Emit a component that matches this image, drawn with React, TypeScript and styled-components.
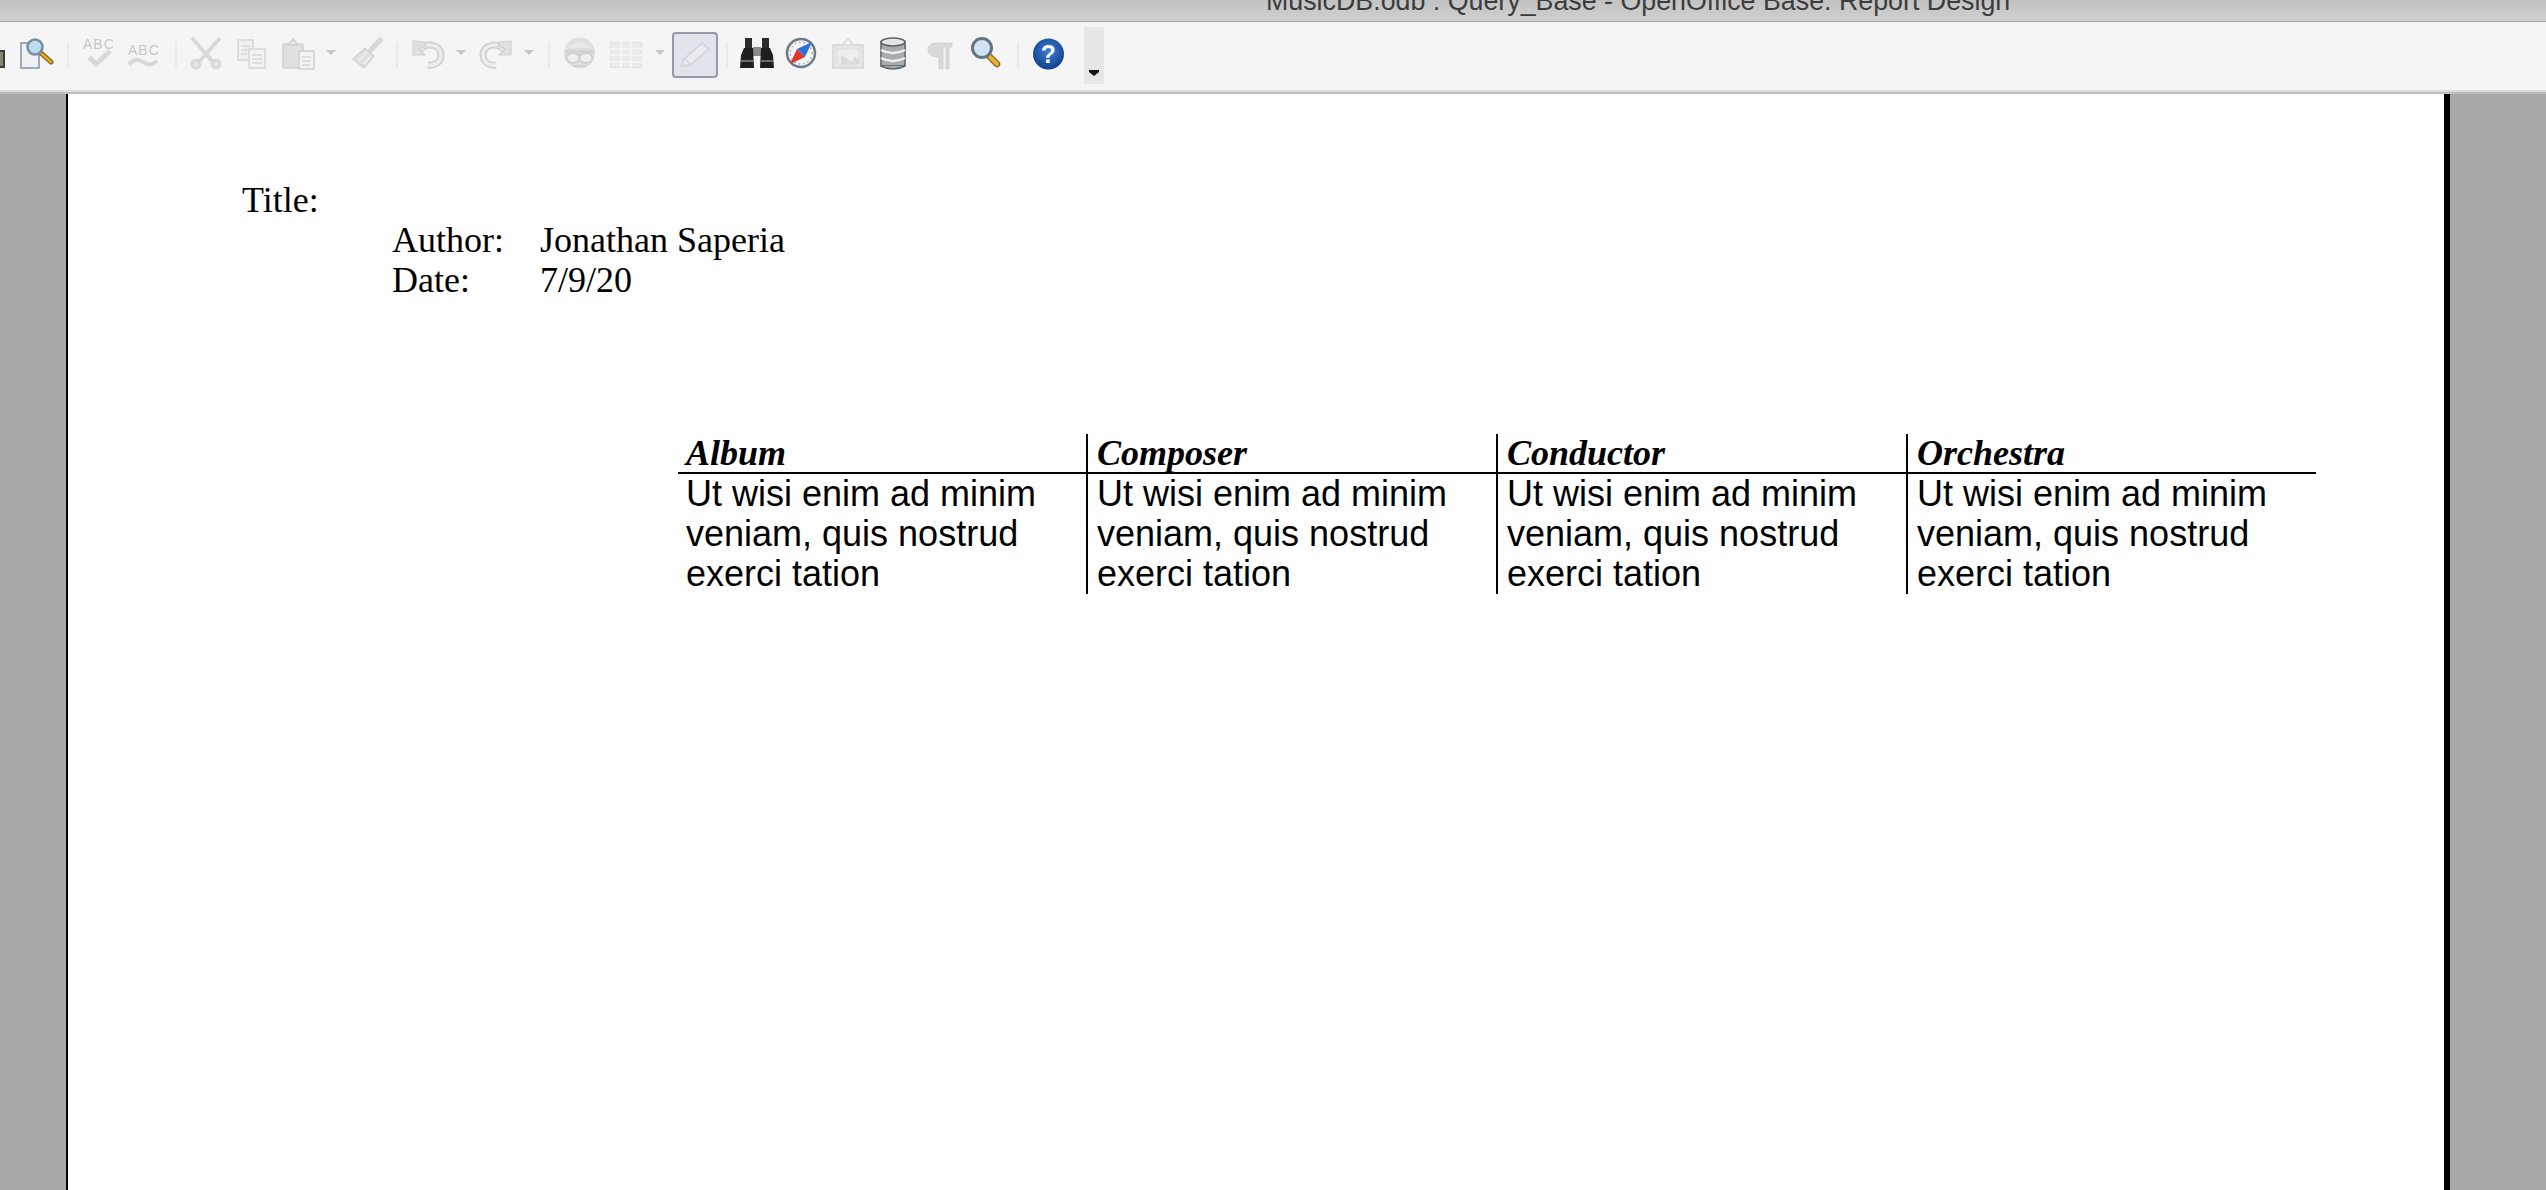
import React from "react";
import styled, { createGlobalStyle } from "styled-components";

const Global = createGlobalStyle`
  html, body { margin: 0; padding: 0; height: 1190px; overflow: hidden; background: #a9a9a9; }
  #root { height: 1190px; }
`;
const Window = styled.div`display: flex; flex-direction: column; height: 1190px; overflow: hidden;`;
const TitleBar = styled.div`
  height: 21px; flex: none; overflow: hidden; padding-left: 1266px;
  background: linear-gradient(#c2c2c2, #d0d0d0);
  border-bottom: 1px solid #a3a3a3;
`;
const TitleText = styled.div`
  margin-top: -12px; font: 26.8px/27px "Liberation Sans", Arial, sans-serif; color: #3c3c3c; white-space: nowrap;
`;
const Toolbar = styled.div`
  box-sizing: border-box; height: 72px; flex: none; display: flex; align-items: center; padding-bottom: 4px;
  background: #f5f5f5;
  border-bottom: 2px solid #bdbdbd;
  box-shadow: inset 0 -2px 0 #dcdcdc;
`;
const Tool = styled.span<{ $w: number; $gap: number }>`
  display: block; flex: none; width: ${p => p.$w}px; margin-left: ${p => p.$gap}px; height: 36px;
  filter: blur(0.5px);
`;
const Sep = styled.span<{ $gap: number }>`
  display: block; flex: none; width: 2px; height: 26px; background: #ebebeb; margin-left: ${p => p.$gap}px;
`;
const ActiveButton = styled.span<{ $gap: number }>`
  display: flex; align-items: center; justify-content: center; flex: none; box-sizing: border-box;
  width: 46px; height: 46px; margin-left: ${p => p.$gap}px;
  background: #e1e4ea; border: 2px solid #9599ae; border-radius: 4px;
`;
const MoreButton = styled.span<{ $gap: number }>`
  display: flex; align-items: flex-end; justify-content: center; flex: none; box-sizing: border-box;
  width: 20px; height: 57px; margin-left: ${p => p.$gap}px; margin-top: 1px; padding-bottom: 8px; background: #e6e6e6;
`;
const Workspace = styled.div`flex: 1; display: flex; min-height: 0;`;
const Gutter = styled.div<{ $w: number }>`flex: none; width: ${p => p.$w}px; background: #a9a9a9;`;
const Sheet = styled.div`
  flex: 1; background: #fff; border-left: 2px solid #000; border-right: 6px solid #000;
  padding: 86px 0 0 174px; color: #000; min-width: 0;
`;
const HeadLine = styled.div<{ $indent?: boolean }>`
  display: flex; font: 36px/40px "Liberation Serif", "Times New Roman", serif; height: 40px;
  padding-left: ${p => (p.$indent ? 150 : 0)}px;
`;
const Label = styled.span`width: 148px; flex: none;`;
const Table = styled.div`
  display: grid; grid-template-columns: 408px 410px 410px 410px; margin: 134px 0 0 436px; width: 1638px;
`;
const HeadCell = styled.div<{ $first?: boolean }>`
  height: 38px; border-bottom: 2px solid #000; border-left: ${p => (p.$first ? "0" : "2px solid #000")};
  padding-left: ${p => (p.$first ? 8 : 9)}px;
  font: italic bold 36px/38px "Liberation Serif", "Times New Roman", serif; white-space: nowrap;
`;
const BodyCell = styled.div<{ $first?: boolean }>`
  border-left: ${p => (p.$first ? "0" : "2px solid #000")}; padding-left: ${p => (p.$first ? 8 : 9)}px;
  font: 36px/40px "Liberation Sans", Arial, sans-serif;
`;
const IconSvg = styled.svg`display: block; overflow: visible;`;

const D = "#d8d8d8", S = "#d0d0d0";

const Arrow = () => (
  <IconSvg width="10" height="36"><polygon points="0,13 10,13 5,18" fill="#c6c6c6" /></IconSvg>
);
const Partial = () => (
  <IconSvg width="5" height="36">
    <rect x="-9" y="14" width="13" height="16" fill="#7b8a6c" stroke="#3a3a3a" strokeWidth="2" />
  </IconSvg>
);
const Preview = () => (
  <IconSvg width="33" height="36">
    <rect x="1" y="6" width="18" height="25" fill="#eef2f8" stroke="#8d97a6" strokeWidth="1.6" />
    <line x1="21" y1="16" x2="31" y2="25" stroke="#6b5a20" strokeWidth="5" strokeLinecap="round" />
    <line x1="22" y1="17" x2="31" y2="25" stroke="#eaa91f" strokeWidth="3" strokeLinecap="round" />
    <circle cx="15" cy="10" r="7.5" fill="#bcdcf3" stroke="#7c8d9d" strokeWidth="2.6" />
  </IconSvg>
);
const AbcCheck = () => (
  <IconSvg width="31" height="36">
    <text x="1" y="12" fontFamily="Liberation Sans" fontSize="14" letterSpacing="1" fill="#c6c6c6">ABC</text>
    <polyline points="7,20 14,27 28,14" fill="none" stroke={D} strokeWidth="5" />
  </IconSvg>
);
const AbcWave = () => (
  <IconSvg width="30" height="36">
    <text x="0" y="18" fontFamily="Liberation Sans" fontSize="14" letterSpacing="1" fill="#c6c6c6">ABC</text>
    <path d="M1 27 Q8 20 15 25 Q22 30 29 24" fill="none" stroke={D} strokeWidth="4" />
  </IconSvg>
);
const Scissors = () => (
  <IconSvg width="32" height="36">
    <line x1="2" y1="1" x2="24" y2="26" stroke={D} strokeWidth="4" />
    <line x1="30" y1="1" x2="8" y2="26" stroke={D} strokeWidth="4" />
    <circle cx="6" cy="27" r="4" fill="#e6e6e6" stroke={D} strokeWidth="3" />
    <circle cx="26" cy="27" r="4" fill="#e6e6e6" stroke={D} strokeWidth="3" />
  </IconSvg>
);
const Copy = () => (
  <IconSvg width="29" height="36">
    <rect x="1" y="3" width="15" height="20" fill="#f0f0f0" stroke={D} strokeWidth="1.6" />
    <path d="M4 9h9M4 13h9M4 17h6" stroke={D} strokeWidth="1.5" />
    <rect x="12" y="12" width="16" height="19" fill="#f3f3f3" stroke={D} strokeWidth="1.6" />
    <path d="M15 18h10M15 22h10M15 26h10" stroke={D} strokeWidth="1.5" />
  </IconSvg>
);
const Paste = () => (
  <IconSvg width="33" height="36">
    <rect x="1" y="7" width="20" height="24" rx="2" fill="#e0e0e0" stroke={S} strokeWidth="1.5" />
    <polygon points="6,8 11,2 16,8" fill="#e6e6e6" stroke={S} strokeWidth="1.5" />
    <rect x="17" y="14" width="15" height="18" fill="#f3f3f3" stroke={S} strokeWidth="1.5" />
    <path d="M20 20h9M20 24h9M20 28h9" stroke={D} strokeWidth="1.5" />
  </IconSvg>
);
const Brush = () => (
  <IconSvg width="30" height="36">
    <line x1="28" y1="3" x2="19" y2="13" stroke={D} strokeWidth="5.5" strokeLinecap="round" />
    <path d="M1 22 L13 11 L22 19 L12 31 Z" fill="#dfdfdf" stroke={S} strokeWidth="1.2" />
    <path d="M7 24 L15 15M12 27 L19 19" stroke="#f0f0f0" strokeWidth="1.5" />
  </IconSvg>
);
const Undo = ({ flip }: { flip?: boolean }) => (
  <IconSvg width="32" height="36" viewBox="0 0 32 36">
    <g transform={flip ? "translate(32,0) scale(-1,1)" : undefined}>
      <path d="M8 13 C14 5 29 7 29 18 C29 25 23 29 16 28" fill="none" stroke={S} strokeWidth="7" />
      <path d="M8 13 C14 5 29 7 29 18 C29 25 23 29 16 28" fill="none" stroke="#ededed" strokeWidth="3.5" />
      <polygon points="1,4 13,5 14,9 7,12 13,18 1,18" fill="#e0e0e0" stroke={S} strokeWidth="1.2" />
    </g>
  </IconSvg>
);
const Face = () => (
  <IconSvg width="33" height="36">
    <circle cx="16.5" cy="16" r="15.5" fill="#dfdfdf" />
    <path d="M6 11 Q16 0 27 11" fill="#e9e9e9" />
    <rect x="2" y="13" width="29" height="3" fill="#d4d4d4" />
    <ellipse cx="10" cy="21" rx="6.5" ry="5" fill="#efefef" stroke={S} strokeWidth="2" />
    <ellipse cx="23" cy="21" rx="6.5" ry="5" fill="#efefef" stroke={S} strokeWidth="2" />
    <path d="M11 29h11" stroke={S} strokeWidth="2" />
  </IconSvg>
);
const TableIcon = () => (
  <IconSvg width="32" height="36">
    <rect x="0.5" y="5.5" width="31" height="25" fill="#ebebeb" stroke="#e0e0e0" />
    <path d="M11 5v26M21 5v26M0 12h32M0 18.500h32M0 25h32" stroke="#f8f8f8" strokeWidth="1.5" />
  </IconSvg>
);
const Pencil = () => (
  <IconSvg width="38" height="36">
    <path d="M5 29 L8 22 L26 6 L33 12 L14 28 Z" fill="#e9ebef" stroke="#d4d6da" strokeWidth="2" />
    <path d="M9 22 L15 28" stroke="#d4d6da" strokeWidth="1.5" />
  </IconSvg>
);
const Binoculars = () => (
  <IconSvg width="34" height="36">
    <rect x="5" y="1" width="7" height="12" fill="#2a2a2a" />
    <rect x="22" y="1" width="7" height="12" fill="#2a2a2a" />
    <rect x="13" y="10" width="8" height="9" fill="#8a8a8a" />
    <path d="M4 11 L13 11 L14 31 L0 31 L1 18 Z" fill="#1f1f1f" />
    <path d="M21 11 L30 11 L33 18 L34 31 L20 31 Z" fill="#1f1f1f" />
    <path d="M1 24h12M21 24h12" stroke="#6d6d6d" strokeWidth="2" />
  </IconSvg>
);
const Compass = () => (
  <IconSvg width="30" height="36">
    <circle cx="15" cy="16" r="14" fill="#f4f4f4" stroke="#6c7a88" strokeWidth="2.5" />
    <circle cx="15" cy="16" r="11" fill="none" stroke="#9aa7b3" strokeWidth="1.5" strokeDasharray="1.5 3" />
    <polygon points="4,27 11,12 19,20" fill="#e5352b" />
    <polygon points="26,5 11,12 19,20" fill="#2f6fe0" />
  </IconSvg>
);
const ImageIcon = () => (
  <IconSvg width="32" height="36">
    <path d="M10 8 L16 2 L22 8" fill="none" stroke={D} strokeWidth="1.5" />
    <rect x="1" y="8" width="30" height="23" fill="#e6e6e6" stroke={D} strokeWidth="1.6" />
    <rect x="5" y="12" width="22" height="15" fill="#eeeeee" stroke="#dcdcdc" />
    <polygon points="9,18 20,25 23,19 27,24 27,27 9,27" fill="#dadada" />
  </IconSvg>
);
const Database = () => (
  <IconSvg width="26" height="36">
    <rect x="1" y="5" width="24" height="24" fill="#a7acb0" stroke="#5f6468" strokeWidth="1.6" />
    <path d="M1 13 Q13 19 25 13 M1 21 Q13 27 25 21" fill="none" stroke="#f1f1f1" strokeWidth="2.5" />
    <path d="M1 29 Q13 35 25 29" fill="#a7acb0" stroke="#5f6468" strokeWidth="1.6" />
    <ellipse cx="13" cy="5" rx="12" ry="4" fill="#e3e5e6" stroke="#5f6468" strokeWidth="1.6" />
  </IconSvg>
);
const Pilcrow = () => (
  <IconSvg width="24" height="36">
    <path d="M9 6 H24 V10 H21 V32 H18 V10 H15 V32 H11 V20 C4 20 0 17 0 13 C0 8 4 6 9 6 Z" fill="#d9d9d9" stroke="#cecece" strokeWidth="0.8" />
  </IconSvg>
);
const Magnifier = () => (
  <IconSvg width="30" height="36">
    <line x1="18" y1="18" x2="27" y2="27" stroke="#7a6012" strokeWidth="6.5" strokeLinecap="round" />
    <line x1="19" y1="19" x2="27" y2="27" stroke="#ecb22e" strokeWidth="4" strokeLinecap="round" />
    <circle cx="12" cy="11" r="9.5" fill="#cfe3f2" stroke="#66737f" strokeWidth="3" />
  </IconSvg>
);
const Help = () => (
  <IconSvg width="33" height="36">
    <defs>
      <radialGradient id="helpBlue" cx="50%" cy="40%" r="60%">
        <stop offset="0%" stopColor="#3d82d6" />
        <stop offset="100%" stopColor="#123f8c" />
      </radialGradient>
    </defs>
    <circle cx="16.500" cy="17" r="15.500" fill="url(#helpBlue)" />
    <text x="16.500" y="26" textAnchor="middle" fontFamily="Liberation Sans" fontWeight="bold" fontSize="25" fill="#fff">?</text>
  </IconSvg>
);

const columns = ["Album", "Composer", "Conductor", "Orchestra"];
const body = ["Ut wisi enim ad minim", "veniam, quis nostrud", "exerci tation"];

export default function App() {
  return (
    <Window>
      <Global />
      <TitleBar>
        <TitleText>MusicDB.odb : Query_Base - OpenOffice Base: Report Design</TitleText>
      </TitleBar>
      <Toolbar>
        <Tool $w={5} $gap={0}><Partial /></Tool>
        <Tool $w={33} $gap={15}><Preview /></Tool>
        <Sep $gap={14} />
        <Tool $w={31} $gap={13}><AbcCheck /></Tool>
        <Tool $w={30} $gap={15}><AbcWave /></Tool>
        <Sep $gap={17} />
        <Tool $w={32} $gap={13}><Scissors /></Tool>
        <Tool $w={29} $gap={15}><Copy /></Tool>
        <Tool $w={33} $gap={16}><Paste /></Tool>
        <Tool $w={10} $gap={11}><Arrow /></Tool>
        <Tool $w={30} $gap={16}><Brush /></Tool>
        <Sep $gap={14} />
        <Tool $w={32} $gap={14}><Undo /></Tool>
        <Tool $w={10} $gap={12}><Arrow /></Tool>
        <Tool $w={32} $gap={14}><Undo flip /></Tool>
        <Tool $w={10} $gap={12}><Arrow /></Tool>
        <Sep $gap={14} />
        <Tool $w={33} $gap={13}><Face /></Tool>
        <Tool $w={32} $gap={14}><TableIcon /></Tool>
        <Tool $w={10} $gap={13}><Arrow /></Tool>
        <ActiveButton $gap={7}><Pencil /></ActiveButton>
        <Sep $gap={8} />
        <Tool $w={34} $gap={12}><Binoculars /></Tool>
        <Tool $w={30} $gap={12}><Compass /></Tool>
        <Tool $w={32} $gap={16}><ImageIcon /></Tool>
        <Tool $w={26} $gap={16}><Database /></Tool>
        <Tool $w={24} $gap={22}><Pilcrow /></Tool>
        <Tool $w={30} $gap={18}><Magnifier /></Tool>
        <Sep $gap={17} />
        <Tool $w={33} $gap={13}><Help /></Tool>
        <MoreButton $gap={19}>
          <svg width="10" height="6"><path d="M0 0h10v2L5 6 0 2z" fill="#111" /></svg>
        </MoreButton>
      </Toolbar>
      <Workspace>
        <Gutter $w={66} />
        <Sheet>
          <HeadLine>Title:</HeadLine>
          <HeadLine $indent><Label>Author:</Label><span>Jonathan Saperia</span></HeadLine>
          <HeadLine $indent><Label>Date:</Label><span>7/9/20</span></HeadLine>
          <Table>
            {columns.map((c, i) => <HeadCell key={c} $first={i === 0}>{c}</HeadCell>)}
            {columns.map((c, i) => (
              <BodyCell key={c} $first={i === 0}>
                {body.map(l => <div key={l}>{l}</div>)}
              </BodyCell>
            ))}
          </Table>
        </Sheet>
        <Gutter $w={96} />
      </Workspace>
    </Window>
  );
}
